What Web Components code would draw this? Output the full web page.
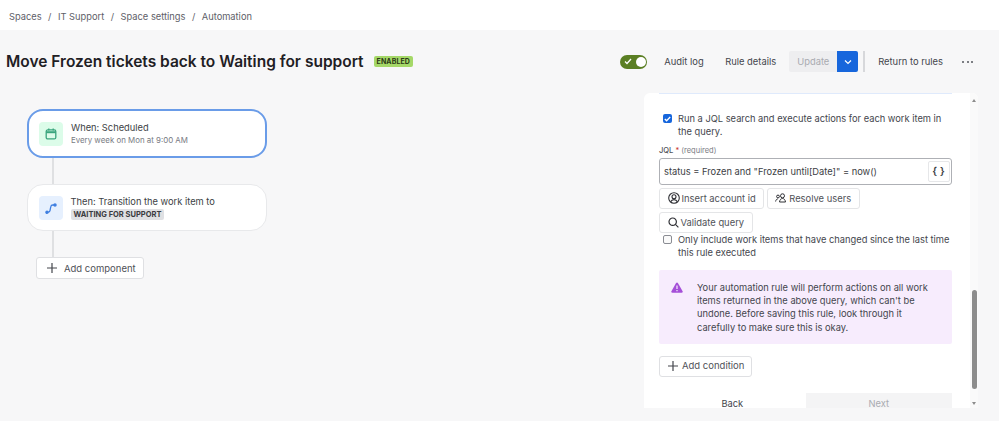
<!DOCTYPE html>
<html>
<head>
<meta charset="utf-8">
<title>Automation</title>
<style>
  html, body { margin: 0; height: 100%; }
  body {
    width: 999px;
    height: 421px;
    overflow: hidden;
    display: flex;
    flex-direction: column;
    background: #f7f7f8;
    color: #292a2e;
    font-family: Inter, "Liberation Sans", sans-serif;
    font-size: 11px;
  }
  .work {
    flex: 1;
    display: flex;
    justify-content: space-between;
    min-height: 0;
  }
</style>
</head>
<body>
<app-breadcrumbs>
  <span>Spaces</span><span>IT Support</span><span>Space settings</span><span>Automation</span>
</app-breadcrumbs>
<rule-header></rule-header>
<div class="work">
  <rule-canvas>
    <rule-node selected heading="When: Scheduled" tone="green">
      <svg slot="icon" width="12" height="12" viewBox="0 0 12 12" fill="none" stroke="#3aa57d" stroke-width="1.300"><rect x="1.200" y="1.900" width="9.600" height="9" rx="1.500"/><path d="M1.200 4.200h9.600" stroke-width="2"/><path d="M3.800 .4v2M8.200 .4v2"/></svg>
      <span class="sub">Every week on Mon at 9:00 AM</span>
    </rule-node>
    <flow-line></flow-line>
    <rule-node heading="Then: Transition the work item to" tone="blue">
      <svg slot="icon" width="14" height="14" viewBox="0 0 14 14" fill="none" stroke="#3f7fe0" stroke-width="1.300" stroke-linecap="round"><path d="M3 11.200h1.200q1.500 0 1.800-1.500l.8-4q.3-1.700 2-1.700h2.200"/><circle cx="3" cy="11.200" r="1.100" fill="#3f7fe0"/><circle cx="11" cy="4" r="1.100" fill="#3f7fe0"/></svg>
      <span class="lozenge">WAITING FOR SUPPORT</span>
    </rule-node>
    <flow-line></flow-line>
    <ui-button class="add" plus>Add component</ui-button>
  </rule-canvas>
  <config-panel></config-panel>
</div>

<script>
class AppBreadcrumbs extends HTMLElement {
  constructor() {
    super();
    this.attachShadow({ mode: "open" });
  }

  connectedCallback() {
    const names = [...this.querySelectorAll("span")];
    names.forEach((name, i) => { name.slot = "c" + i; });
    this.shadowRoot.innerHTML = /* html */`
    <style>
      :host {
        display: flex;
        align-items: center;
        flex: none;
        height: 30px;
        padding: 3px 0 0 9px;
        box-sizing: border-box;
        background: #fff;
        color: #5e6068;
        font-size: 9.300px;
      }
      i { font-style: normal; margin: 0 6.500px; }
    </style>
    ${names.map((_, i) => `${i ? "<i>/</i>" : ""}<slot name="c${i}"></slot>`).join("")}`;
  }
}

class RuleHeader extends HTMLElement {
  constructor() {
    super();
    this.attachShadow({ mode: "open" });
  }

  connectedCallback() {
    this.shadowRoot.innerHTML = /* html */`
    <style>
      :host {
        display: flex;
        align-items: center;
        flex: none;
        height: 63px;
        padding: 0 26px 0 6px;
        box-sizing: border-box;
      }
      h1 {
        margin: 0;
        font-size: 15.500px;
        font-weight: 600;
        color: #1f2024;
        white-space: nowrap;
      }
      .badge {
        margin-left: 10px;
        padding: 0 3px;
        height: 11px;
        line-height: 11px;
        border-radius: 2px;
        background: #a5d868;
        color: #2c3a17;
        font-size: 7px;
        font-weight: 700;
        letter-spacing: .1px;
      }
      .right { margin-left: auto; display: flex; align-items: center; color: #44464d; font-size: 9.400px; }
      .toggle {
        width: 27px;
        height: 14px;
        border-radius: 7px;
        background: #5b7f24;
        display: flex;
        align-items: center;
        justify-content: space-between;
        padding: 0 1.500px 0 4px;
        box-sizing: border-box;
        margin-right: 17px;
      }
      .toggle b { width: 10px; height: 10px; border-radius: 50%; background: #fff; }
      .link { white-space: nowrap; }
      .link + .link { margin-left: 21.500px; }
      .update {
        display: flex;
        align-items: center;
        height: 21px;
        width: 48px;
        margin-left: 13px;
        padding-left: 8px;
        box-sizing: border-box;
        background: #eeeef0;
        color: #a9abb1;
        border-radius: 2px 0 0 2px;
      }
      .drop {
        width: 21px;
        height: 21px;
        background: #1766dc;
        display: flex;
        align-items: center;
        justify-content: center;
        border-radius: 0 2px 2px 0;
      }
      .sep { width: 2px; height: 21px; background: #d7d8db; margin: 0 13px 0 5px; }
      .more { display: flex; gap: 2.500px; margin-left: 19px; }
      .more b { width: 2px; height: 2px; border-radius: 50%; background: #55575e; }
    </style>
    <h1>Move Frozen tickets back to Waiting for support</h1>
    <span class="badge">ENABLED</span>
    <div class="right">
      <span class="toggle">
        <svg width="8" height="7" viewBox="0 0 8 7" fill="none" stroke="#fff" stroke-width="1.300"><path d="M1 3.500l2 2 4-4.500"/></svg>
        <b></b>
      </span>
      <span class="link">Audit log</span>
      <span class="link">Rule details</span>
      <span class="update">Update</span>
      <span class="drop"><svg width="8" height="6" viewBox="0 0 8 6" fill="none" stroke="#fff" stroke-width="1.200"><path d="M1 1.500l3 3 3-3"/></svg></span>
      <span class="sep"></span>
      <span class="link">Return to rules</span>
      <span class="more"><b></b><b></b><b></b></span>
    </div>`;
  }
}

class RuleCanvas extends HTMLElement {
  constructor() {
    super();
    this.attachShadow({ mode: "open" });
  }

  connectedCallback() {
    this.shadowRoot.innerHTML = /* html */`
    <style>
      :host {
        display: flex;
        flex-direction: column;
        align-items: flex-start;
        width: 240px;
        margin: 16px 0 0 27px;
      }
    </style>
    <slot></slot>`;
  }
}

class RuleNode extends HTMLElement {
  constructor() {
    super();
    this.attachShadow({ mode: "open" });
  }

  connectedCallback() {
    const selected = this.hasAttribute("selected");
    const green = this.getAttribute("tone") === "green";
    this.shadowRoot.innerHTML = /* html */`
    <style>
      :host {
        display: flex;
        align-items: center;
        box-sizing: border-box;
        width: 240px;
        height: ${selected ? 49 : 47}px;
        padding: 0 ${selected ? "10px" : "10.500px"};
        background: #fff;
        border: ${selected ? "2px solid #6a9ce8" : "1px solid #e8e9eb"};
        border-radius: 16px;
      }
      .icon {
        flex: none;
        width: 24px;
        height: 24px;
        border-radius: 4px;
        display: flex;
        align-items: center;
        justify-content: center;
        background: ${green ? "#dcfce9" : "#e6f0fe"};
        margin-right: 8px;
      }
      .text { display: flex; flex-direction: column; gap: 1px; align-items: flex-start; }
      .heading { font-size: 9.300px; color: #3d3f45; line-height: 13px; white-space: nowrap; }
      ::slotted(.sub) { font-size: 7.900px; color: #797b83; line-height: 11px; white-space: nowrap; }
      ::slotted(.lozenge) {
        font-size: 7.500px;
        font-weight: 700;
        color: #3a3b40;
        background: #dfe0e3;
        padding: 0 3px;
        border-radius: 2px;
        line-height: 11px;
        white-space: nowrap;
      }
    </style>
    <span class="icon"><slot name="icon"></slot></span>
    <div class="text">
      <span class="heading">${this.getAttribute("heading")}</span>
      <slot></slot>
    </div>`;
  }
}

class FlowLine extends HTMLElement {
  constructor() {
    super();
    this.attachShadow({ mode: "open" });
  }

  connectedCallback() {
    this.shadowRoot.innerHTML = /* html */`
    <style>
      :host {
        display: block;
        width: 2px;
        height: 26px;
        margin-left: 25px;
        background: #dfe0e2;
      }
    </style>`;
  }
}

class UiButton extends HTMLElement {
  constructor() {
    super();
    this.attachShadow({ mode: "open" });
  }

  connectedCallback() {
    const plus = this.hasAttribute("plus");
    this.shadowRoot.innerHTML = /* html */`
    <style>
      :host {
        display: inline-flex;
        align-items: center;
        gap: 2px;
        flex: none;
        box-sizing: border-box;
        height: 21px;
        padding: 0 7.500px;
        background: #fff;
        border: 1px solid #e4e5e7;
        border-radius: 3px;
        color: #505258;
        font-size: 9.400px;
        white-space: nowrap;
      }
      :host(.add) { height: 22px; margin-left: 9px; padding: 0 7px 0 10px; gap: 7px; border-color: #dfe0e3; font-size: 9.500px; }
      :host(.cond) { height: 21px; margin-left: 0; padding: 0 7px 0 8px; gap: 4px; }
      svg.plus { display: block; }
    </style>
    ${plus ? `<svg class="plus" width="10" height="10" viewBox="0 0 10 10" stroke="#44464d" stroke-width="1.200"><path d="M5 0v10M0 5h10"/></svg>` : ""}
    <slot name="icon"></slot><slot></slot>`;
  }
}

class ConfigPanel extends HTMLElement {
  constructor() {
    super();
    this.attachShadow({ mode: "open" });
  }

  connectedCallback() {
    this.shadowRoot.innerHTML = /* html */`
    <style>
      :host {
        display: flex;
        flex: none;
        width: 334px;
        height: 315px;
        margin-right: 21px;
        background: #fff;
        border-radius: 6px 6px 0 0;
        overflow: hidden;
        color: #44464d;
        font-size: 9.300px;
        line-height: 13.400px;
      }
      .body {
        flex: 1;
        min-width: 0;
        position: relative;
        display: flex;
        flex-direction: column;
        align-items: flex-start;
        padding: 19px 18px 0 15px;
      }
      .topline {
        position: absolute;
        left: 15px;
        right: 18px;
        top: 0;
        height: 1px;
        background: #dfeafc;
      }
      .check { display: flex; gap: 6px; padding-left: 4px; width: 100%; box-sizing: border-box; }
      .box {
        flex: none;
        width: 9px;
        height: 9px;
        margin-top: 2px;
        border-radius: 2px;
        display: flex;
        align-items: center;
        justify-content: center;
        box-sizing: border-box;
      }
      .box.on { background: #1766dc; }
      .box.off { border: 1px solid #8a8c93; background: #fafafa; }
      .label { margin-top: 7px; font-size: 7.500px; line-height: 10px; color: #505258; }
      .label b { font-weight: 500; }
      .label .req { color: #c9372c; }
      .label .hint { color: #797b83; }
      .field {
        margin-top: 2px;
        align-self: stretch;
        box-sizing: border-box;
        height: 27px;
        border: 1px solid #aeb0b5;
        border-radius: 3px;
        display: flex;
        align-items: center;
        justify-content: space-between;
        padding: 0 1.500px 0 4px;
        color: #3c3e44;
        font-size: 9.300px;
      }
      .braces {
        width: 22px;
        height: 21px;
        border: 1px solid #e6e7e9;
        border-radius: 2px;
        box-sizing: border-box;
        display: flex;
        align-items: center;
        justify-content: center;
        font-weight: 600;
        font-size: 10.500px;
        letter-spacing: 3px;
        padding-left: 3px;
      }
      .buttons { margin-top: 3px; display: flex; gap: 2.500px; }
      .tail { margin-top: 0; }
      .warn {
        margin-top: 10px;
        align-self: stretch;
        box-sizing: border-box;
        height: 74px;
        background: #f7ecfd;
        border-radius: 2px;
        padding: 11px 12px 0 12px;
        display: flex;
        gap: 14px;
      }
      .warn svg { flex: none; margin-top: 1px; }
      .cond { margin-top: 12px; }
      .nav {
        align-self: stretch;
        display: flex;
        height: 15px;
        text-align: center;
        align-items: flex-start;
        margin-top: 16px;
      }
      .nav span { flex: 1; height: 15px; padding-top: 4px; }
      .nav .next { background: #f4f4f5; color: #a9abb1; }
      .scroll {
        flex: none;
        width: 8px;
        position: relative;
        background: #fafafa;
      }
      .scroll .thumb {
        position: absolute;
        left: 1.500px;
        top: 197px;
        width: 5px;
        height: 99px;
        border-radius: 3px;
        background: #8c8c8c;
      }
      .scroll i {
        position: absolute;
        left: 1.500px;
        width: 0;
        height: 0;
        border-left: 2.500px solid transparent;
        border-right: 2.500px solid transparent;
      }
      .scroll .up { top: 6px; border-bottom: 3.500px solid #8c8c8c; }
      .scroll .down { bottom: 3px; border-top: 3.500px solid #8c8c8c; }
    </style>
    <div class="body">
      <span class="topline"></span>
      <div class="check">
        <span class="box on"><svg width="7" height="6" viewBox="0 0 7 6" fill="none" stroke="#fff" stroke-width="1.300"><path d="M.8 3l1.800 1.800L6.200 1"/></svg></span>
        <span>Run a JQL search and execute actions for each work item in the query.</span>
      </div>
      <div class="label"><b>JQL</b> <span class="req">*</span> <span class="hint">(required)</span></div>
      <div class="field">
        <span>status = Frozen and "Frozen until[Date]" = now()</span>
        <span class="braces">{}</span>
      </div>
      <div class="buttons">
        <ui-button>
          <svg slot="icon" width="12" height="12" viewBox="0 0 12 12" fill="none" stroke="#2f3035" stroke-width="1.100"><circle cx="6" cy="6" r="5.300"/><circle cx="6" cy="4.800" r="2"/><path d="M2.700 9.800c.6-1.500 1.900-2.200 3.300-2.200s2.700.7 3.300 2.200"/></svg>
          Insert account id
        </ui-button>
        <ui-button>
          <svg slot="icon" width="12" height="11" viewBox="0 0 12 11" fill="none" stroke="#2f3035" stroke-width="1"><circle cx="7.500" cy="2.800" r="2"/><path d="M4.500 9c.3-2.300 1.500-3.500 3-3.500s2.700 1.200 3 3.500z"/><circle cx="3" cy="3.500" r="1.400"/><path d="M.6 8.500c.2-1.500.9-2.400 2.200-2.600"/></svg>
          Resolve users
        </ui-button>
      </div>
      <div class="buttons">
        <ui-button>
          <svg slot="icon" width="11" height="11" viewBox="0 0 11 11" fill="none" stroke="#2f3035" stroke-width="1.200"><circle cx="4.700" cy="4.700" r="3.700"/><path d="M7.400 7.400l3 3"/></svg>
          Validate query
        </ui-button>
      </div>
      <div class="check tail">
        <span class="box off"></span>
        <span>Only include work items that have changed since the last time this rule executed</span>
      </div>
      <div class="warn">
        <svg width="12" height="11" viewBox="0 0 12 11"><path d="M6 .6c.4 0 .7.2.9.5l4.700 8.200c.4.7-.1 1.400-.9 1.400H1.300C.5 10.700 0 10 .4 9.300L5.100 1.100C5.300.8 5.600.6 6 .6z" fill="#a54fd8"/><path d="M6 3.500v3.500M6 8v1.300" stroke="#fff" stroke-width="1.100"/></svg>
        <span>Your automation rule will perform actions on all work items returned in the above query, which can't be undone. Before saving this rule, look through it carefully to make sure this is okay.</span>
      </div>
      <ui-button class="add cond" plus>Add condition</ui-button>
      <div class="nav"><span>Back</span><span class="next">Next</span></div>
    </div>
    <div class="scroll"><i class="up"></i><span class="thumb"></span><i class="down"></i></div>`;
  }
}

customElements.define("app-breadcrumbs", AppBreadcrumbs);
customElements.define("rule-header", RuleHeader);
customElements.define("rule-canvas", RuleCanvas);
customElements.define("rule-node", RuleNode);
customElements.define("flow-line", FlowLine);
customElements.define("ui-button", UiButton);
customElements.define("config-panel", ConfigPanel);
</script>
</body>
</html>
